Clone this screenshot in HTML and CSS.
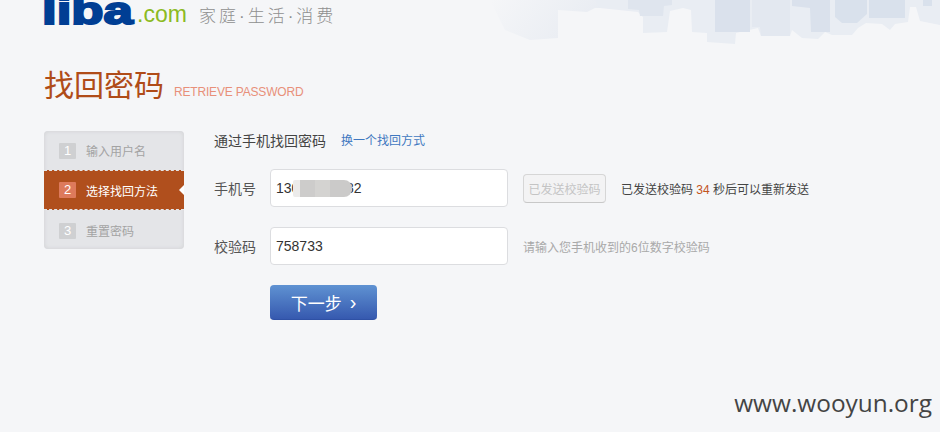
FILE: index.html
```html
<!DOCTYPE html>
<html lang="zh-CN">
<head>
<meta charset="utf-8">
<title>找回密码</title>
<link rel="stylesheet" href="styles.css">
</head>
<body>
<svg class="skyline" width="460" height="60" viewBox="0 0 460 60" aria-hidden="true">
  <defs>
    <linearGradient id="fade" x1="0" y1="0" x2="1" y2="0.25">
      <stop offset="0" stop-color="#f5f6f8"/>
      <stop offset="1" stop-color="#e6eaf1"/>
    </linearGradient>
  </defs>
  <polygon fill="url(#fade)" points="10,0 150,0 150,8 115,8 107,12 78,10 78,38 50,40 25,30"/>
  <polygon fill="#e9edf3" points="115,0 460,0 460,25 440,21 436,7 430,7 428,22 415,24 410,30 402,24 386,23 378,28 372,35 352,35 345,32 338,39 322,38 312,30 310,36 281,36 278,28 256,33 255,44 227,42 227,33 212,32 211,10 203,8 190,11 187,32 163,33 163,17 158,12 120,8"/>
  <polygon fill="#dfe5ee" points="148,0 192,0 192,5 184,6 183,16 160,16 159,10 148,9"/>
  <polygon fill="#dae1ec" points="235,0 270,0 270,32 235,32"/>
  <polygon fill="#e3e8f0" points="272,0 310,0 310,36 281,36 280,27 272,27"/>
  <polygon fill="#dae1ec" points="312,0 350,0 350,32 331,32 330,8 312,6"/>
  <polygon fill="#d9e1ec" points="355,0 387,0 387,14 377,23 362,23 355,17"/>
  <polygon fill="#d9e1ec" points="389,0 425,0 425,18 389,18"/>
  <polygon fill="#d9e1ec" points="443,0 452,0 452,6 443,6"/>
</svg>

<header class="brand">
  <span class="logo">liba</span><span class="logo-tld">.com</span>
  <span class="slogan">家庭·生活·消费</span>
</header>

<div class="heading">
  <h1>找回密码</h1>
  <span class="heading-en">RETRIEVE PASSWORD</span>
</div>

<main class="layout">
  <ol class="steps">
    <li class="step"><span class="num">1</span>输入用户名</li>
    <li class="step active"><span class="num">2</span>选择找回方法</li>
    <li class="step"><span class="num">3</span>重置密码</li>
  </ol>

  <form class="form">
    <div class="method">
      <span class="method-name">通过手机找回密码</span>
      <a class="method-link" href="#">换一个找回方式</a>
    </div>
    <div class="row">
      <label class="label">手机号</label>
      <div class="field">
        <input class="input" value="13000000082">
        <span class="mask"></span>
      </div>
      <button class="send" type="button">已发送校验码</button>
      <span class="note">已发送校验码 <em>34</em> 秒后可以重新发送</span>
    </div>
    <div class="row">
      <label class="label">校验码</label>
      <div class="field">
        <input class="input" value="758733">
      </div>
      <span class="hint">请输入您手机收到的6位数字校验码</span>
    </div>
    <div class="actions">
      <button class="next" type="button">下一步<span class="chev">›</span></button>
    </div>
  </form>
</main>

<div class="watermark">www.wooyun.org</div>
</body>
</html>
```

FILE: styles.css
```css
* { box-sizing: border-box; }

html, body { height: 100%; }

body {
  margin: 0;
  position: relative;
  overflow: hidden;
  background: #f5f6f8;
  color: #444;
  font-family: "Liberation Sans", "Noto Sans CJK SC", sans-serif;
  font-size: 12px;
}

.skyline {
  position: absolute;
  top: 0;
  right: 0;
}

.brand {
  position: relative;
  display: flex;
  align-items: flex-end;
  height: 30px;
  padding-left: 44px;
  overflow: hidden;
}

.logo {
  font-size: 38px;
  line-height: 30px;
  height: 30px;
  width: 93px;
  font-weight: 700;
  color: #003e94;
  -webkit-text-stroke: 2px #003e94;
  transform: translate(-2px, -4px) scaleX(1.39);
  transform-origin: left bottom;
}

.logo-tld {
  font-size: 23px;
  line-height: 30px;
  height: 30px;
  width: 50px;
  color: #8cba22;
  transform: translateY(-1px);
}

.slogan {
  font-size: 17px;
  line-height: 30px;
  height: 30px;
  color: #8f8f8f;
  margin-left: 12px;
  font-weight: 300;
  letter-spacing: 3px;
  transform: translateY(2px);
}

.heading {
  display: flex;
  align-items: baseline;
  gap: 10px;
  height: 101px;
  padding: 35px 0 0 44px;
}

.heading h1 {
  margin: 0;
  font-size: 30px;
  line-height: 42px;
  font-weight: 400;
  color: #b04c18;
}

.heading-en {
  font-size: 12px;
  color: #e8907a;
  letter-spacing: -0.18px;
}

.layout {
  display: flex;
  padding-left: 44px;
}

.steps {
  width: 140px;
  height: 118px;
  margin: 0;
  padding: 0;
  list-style: none;
  background: #e4e5e8;
  border-radius: 4px;
  box-shadow: inset 0 0 4px #cfd0d3;
  overflow: hidden;
}

.step {
  position: relative;
  display: flex;
  align-items: center;
  height: 39px;
  padding-left: 15px;
  color: #a3a3a3;
}

.step:last-child { padding-top: 2px; }

.step.active {
  height: 40px;
  background: #b04f1d;
  color: #fff;
  border-top: 1px dashed #e4e5e8;
  border-bottom: 1px dashed #e4e5e8;
}

.step.active::after {
  content: "";
  position: absolute;
  right: 0;
  top: 14px;
  border: 5px solid transparent;
  border-left-width: 0;
  border-right-color: #fff;
}

.num {
  width: 17px;
  height: 16px;
  margin-right: 10px;
  border-radius: 1px;
  background: #cfd0d2;
  color: #fff;
  font-size: 13px;
  line-height: 16px;
  text-align: center;
}

.active .num { background: #dd7a5c; }

.form {
  margin-left: 30px;
  margin-top: -2px;
}

.method {
  display: flex;
  align-items: center;
  height: 21px;
}

.method-name {
  font-size: 14px;
  color: #444;
}

.method-link {
  margin-left: 15px;
  color: #3f78c0;
  text-decoration: none;
}

.row {
  display: flex;
  align-items: center;
  height: 38px;
  margin-top: 20px;
}

.method + .row { margin-top: 19px; }

.label {
  width: 56px;
  font-size: 14px;
  color: #555;
}

.field {
  position: relative;
  width: 238px;
  height: 38px;
}

.input {
  display: block;
  width: 100%;
  height: 100%;
  padding: 0 5px;
  border: 1px solid #dcdde0;
  border-radius: 4px;
  background: #fff;
  color: #333;
  font: 14px "Liberation Sans", sans-serif;
  outline: none;
}

.mask {
  position: absolute;
  left: 23px;
  top: 11px;
  width: 59px;
  height: 17px;
  border-radius: 2px 8px 8px 2px;
  background: linear-gradient(90deg, #ecebea 0 12%, #cdcccb 12% 37%, #d4d3d1 37% 62%, #cbcac9 62% 100%);
}

.send {
  width: 83px;
  height: 29px;
  margin-left: 15px;
  padding: 0;
  border: 1px solid #d6d6d6;
  border-bottom-color: #c8c8c8;
  border-radius: 4px;
  background: #f3f3f4;
  color: #c4c4c4;
  font: 12px "Liberation Sans", "Noto Sans CJK SC", sans-serif;
}

.note {
  margin-left: 15px;
  color: #444;
}

.note em {
  font-style: normal;
  color: #c2541e;
}

.hint {
  margin-left: 15px;
  color: #a9a9a9;
}

.actions {
  margin-top: 20px;
  padding-left: 56px;
}

.next {
  display: flex;
  align-items: center;
  justify-content: center;
  width: 107px;
  height: 35px;
  padding: 0;
  border: 0;
  border-radius: 4px;
  border-bottom: 1px solid #2f51a5;
  background: linear-gradient(#5f92d2, #3659af);
  color: #fff;
  font: 17px "Liberation Sans", "Noto Sans CJK SC", sans-serif;
}

.chev {
  margin-left: 8px;
  font-size: 20px;
  line-height: 20px;
}

.watermark {
  position: absolute;
  right: 8px;
  top: 387px;
  font-family: "Open Sans", sans-serif;
  font-size: 24.4px;
  line-height: 32px;
  color: #444;
}
```
